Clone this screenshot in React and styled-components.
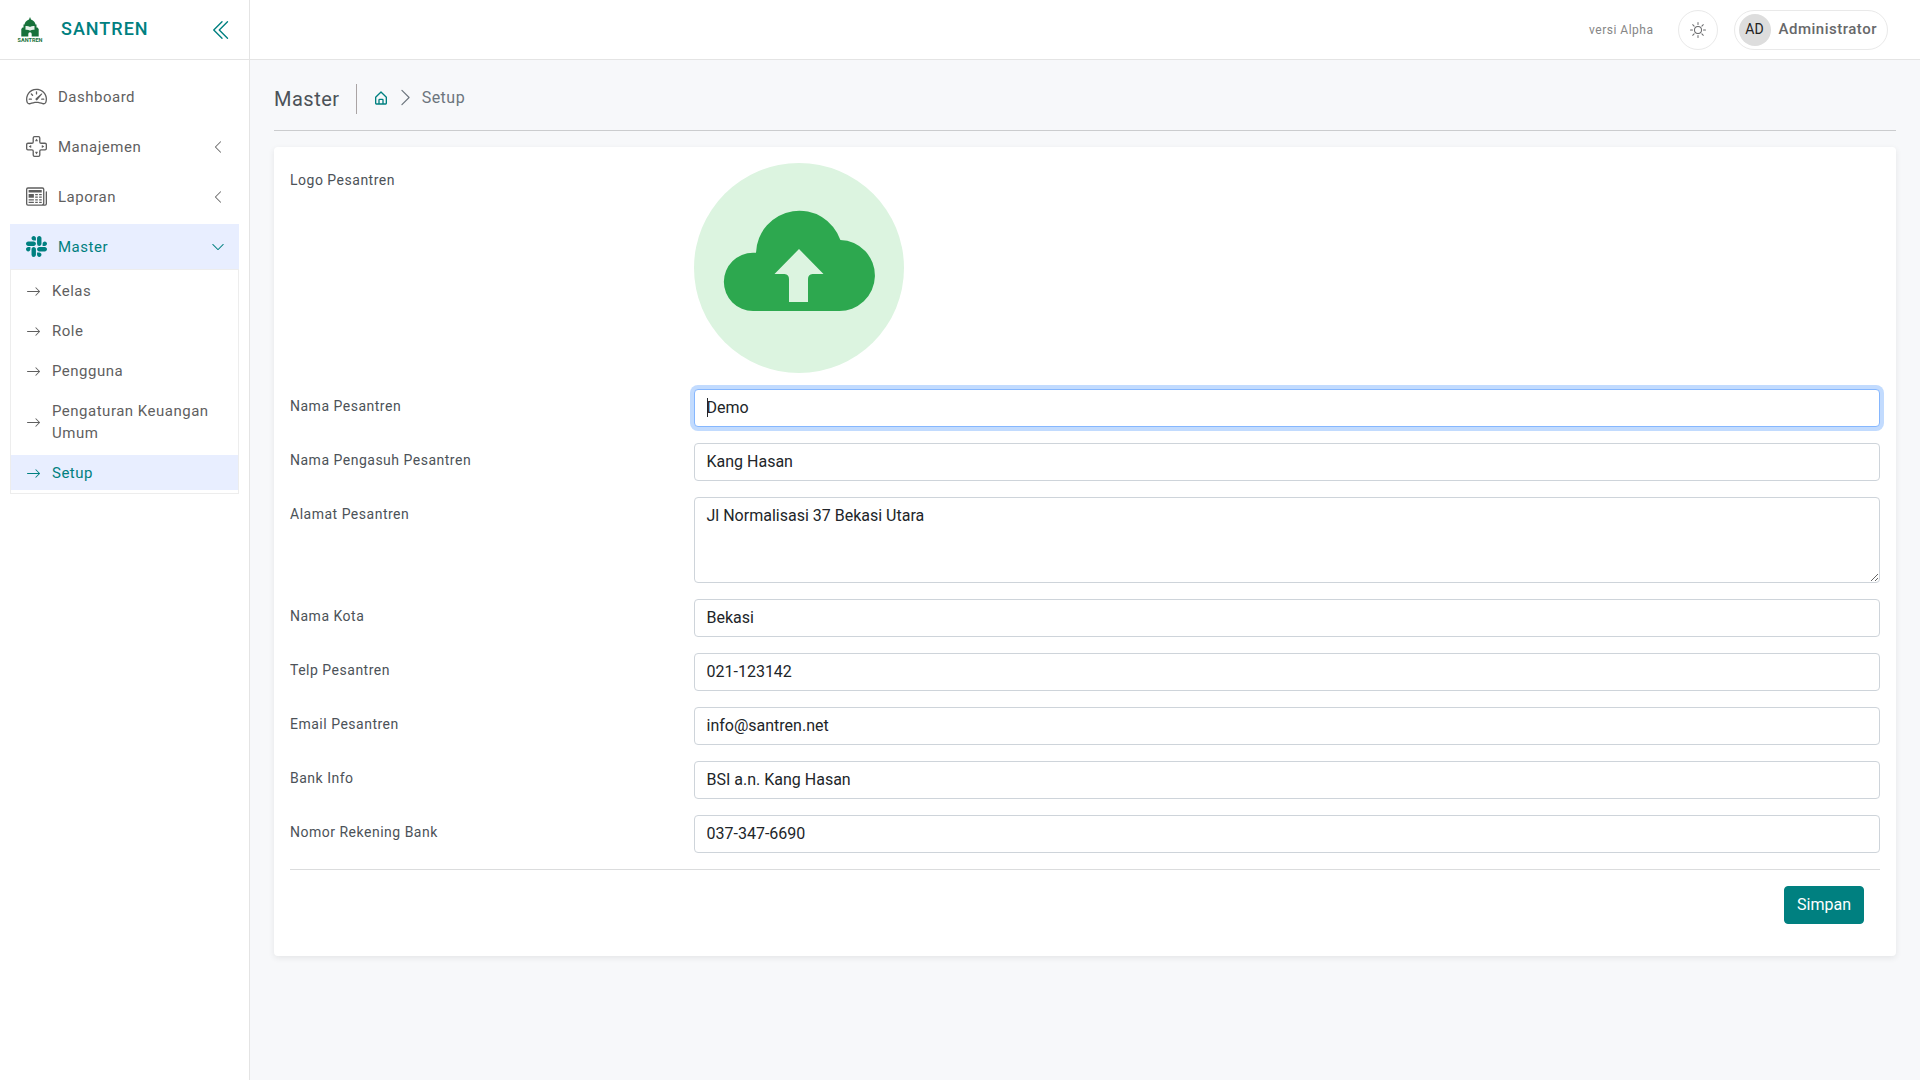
import React, { useState } from 'react';
import styled, { createGlobalStyle, css } from 'styled-components';
import {
	BsArrowRight,
	BsChevronDoubleLeft,
	BsChevronDown,
	BsChevronLeft,
	BsChevronRight,
	BsDpad,
	BsNewspaper,
	BsSlack,
	BsSpeedometer2,
	BsSun,
} from 'react-icons/bs';
import { BiHomeAlt } from 'react-icons/bi';

const GlobalStyle = createGlobalStyle`
*, *::before, *::after {
box-sizing: border-box;
}
body {
margin: 0;
background: #f7f8fa;
color: #4c5258;
font-family: Roboto, 'Liberation Sans', sans-serif;
font-size: 14px;
line-height: 21px;
letter-spacing: 0.036em;
}
a {
color: inherit;
text-decoration: none;
}
`;

const Layout = styled.div`
display: grid;
grid-template-columns: 250px 1fr;
min-height: 100vh;
`;

const Sidebar = styled.aside`
background: #ffffff;
border-right: 1px solid #e4e4e4;
`;

const Brand = styled.div`
display: flex;
align-items: center;
height: 60px;
padding: 0 16px;
border-bottom: 1px solid #e4e4e4;
`;

const BrandName = styled.h4`
flex: 1;
margin: 0 0 0 17px;
padding-bottom: 2px;
color: #008080;
font-size: 18px;
font-weight: 500;
line-height: 24px;
letter-spacing: 1px;
`;

const IconButton = styled.button`
display: flex;
padding: 0;
border: 0;
background: transparent;
color: #008080;
cursor: pointer;
`;

const Menu = styled.ul`
display: flex;
flex-direction: column;
gap: 5px;
margin: 0;
padding: 14px 10px;
list-style: none;
`;

const active = css`
background: #e8eeff;
color: #008080;
`;

const MenuLink = styled.a`
display: flex;
align-items: center;
height: 45px;
padding: 0 14px 0 16px;
color: #5f5f5f;
font-size: 15px;
line-height: 22px;
${props => props.$active && active}
`;

const MenuTitle = styled.span`
flex: 1;
margin-left: 11px;
`;

const SubMenu = styled.ul`
display: flex;
flex-direction: column;
gap: 5px;
margin: 0;
padding: 3px 0;
border: 1px solid #ededed;
list-style: none;
`;

const SubLink = styled.a`
display: flex;
align-items: center;
gap: 11px;
padding: 7px 15px 6px;
color: #5f5f5f;
font-size: 15px;
line-height: 22px;
svg {
flex: none;
}
${props => props.$active && active}
`;

const Topbar = styled.header`
display: flex;
align-items: center;
justify-content: flex-end;
height: 60px;
padding: 0 32px;
background: #ffffff;
border-bottom: 1px solid #e4e4e4;
`;

const Version = styled.span`
margin-right: 24px;
color: #868686;
font-size: 12px;
line-height: 20px;
`;

const ThemeButton = styled(IconButton)`
align-items: center;
justify-content: center;
width: 40px;
height: 40px;
margin-right: 16px;
border: 1px solid #e9e9e9;
border-radius: 50%;
color: #67686a;
`;

const UserButton = styled.button`
display: flex;
align-items: center;
gap: 8px;
height: 40px;
padding: 0 10px 0 4px;
border: 1px solid #e9e9e9;
border-radius: 20px;
background: transparent;
color: #67686a;
font: inherit;
font-size: 15px;
font-weight: 500;
letter-spacing: inherit;
cursor: pointer;
`;

const Avatar = styled.span`
display: flex;
align-items: center;
justify-content: center;
width: 32px;
height: 32px;
border-radius: 50%;
background: #dddddd;
color: #222222;
font-size: 14px;
font-weight: 400;
letter-spacing: normal;
`;

const Content = styled.main`
padding: 24px;
`;

const PageHead = styled.div`
display: flex;
align-items: center;
height: 47px;
margin-bottom: 16px;
padding-bottom: 17px;
border-bottom: 1px solid #cbccce;
`;

const PageTitle = styled.h1`
margin: 0 16px 0 0;
padding-right: 16px;
border-right: 1px solid #aaa4a4;
font-size: 20px;
font-weight: 400;
line-height: 30px;
`;

const Breadcrumb = styled.nav`
display: flex;
align-items: center;
gap: 7px;
padding-bottom: 2px;
color: #6c757d;
font-size: 16px;
line-height: 24px;
a {
display: flex;
color: #008080;
}
`;

const Card = styled.form`
padding: 16px 16px 32px;
border-radius: 4px;
background: #ffffff;
box-shadow: 0 2px 6px rgba(0, 0, 0, 0.08);
`;

const Row = styled.div`
display: flex;
margin: 0 -12px 16px;
`;

const LabelCol = styled.div`
flex: 0 0 25%;
padding: 7px 12px;
`;

const FieldCol = styled.div`
display: flex;
flex: 1;
padding: 0 12px;
`;

const caret = css`
background: linear-gradient(#212529, #212529) 12px 8px / 1px 19px no-repeat #ffffff;
`;

const field = css`
display: block;
width: 100%;
padding: 6px 12px;
border: 1px solid #ced4da;
border-radius: 4px;
background: #ffffff;
color: #212529;
font-family: inherit;
font-size: 16px;
line-height: 24px;
&:focus {
border-color: #86b7fe;
outline: 0;
box-shadow: 0 0 0 4px #c2dbfe;
${props => props.$pristine && caret}
}
`;

const Input = styled.input`
${field}
height: 38px;
padding: 5px 12px 7px;
`;

const TextArea = styled.textarea`
${field}
resize: vertical;
`;

const UploadButton = styled(IconButton)`
border-radius: 50%;
`;

const Footer = styled.div`
display: flex;
justify-content: flex-end;
padding: 16px 16px 0;
border-top: 1px solid #dbdcdd;
`;

const SaveButton = styled.button`
height: 38px;
padding: 6px 12px;
border: 1px solid #008080;
border-radius: 4px;
background: #008080;
color: #ffffff;
font-family: inherit;
font-size: 16px;
line-height: 24px;
cursor: pointer;
`;

const MENU = [
	{ title: 'Dashboard', Icon: BsSpeedometer2 },
	{ title: 'Manajemen', Icon: BsDpad, hasChildren: true },
	{ title: 'Laporan', Icon: BsNewspaper, hasChildren: true },
];

const MASTER = ['Kelas', 'Role', 'Pengguna', 'Pengaturan Keuangan Umum', 'Setup'];

const FIELDS = [
	{ name: 'nama', label: 'Nama Pesantren', value: 'Demo' },
	{ name: 'pengasuh', label: 'Nama Pengasuh Pesantren', value: 'Kang Hasan' },
	{ name: 'alamat', label: 'Alamat Pesantren', value: 'Jl Normalisasi 37 Bekasi Utara', multiline: true },
	{ name: 'kota', label: 'Nama Kota', value: 'Bekasi' },
	{ name: 'telp', label: 'Telp Pesantren', value: '021-123142' },
	{ name: 'email', label: 'Email Pesantren', value: 'info@santren.net' },
	{ name: 'bank', label: 'Bank Info', value: 'BSI a.n. Kang Hasan' },
	{ name: 'rekening', label: 'Nomor Rekening Bank', value: '037-347-6690' },
];

const Logo = () => (
	<svg width="28" height="28" viewBox="0 0 28 28" fill="#17713a">
		<path d="M14 1l1 2.500c2.800 1.200 4.500 2.800 4.500 5.500h-11c0-2.700 1.700-4.300 4.500-5.500z" />
		<path d="M7.500 8.500h13v3h1l1.200 1.500v7.500h-7V18a1.700 1.700 0 0 0-3.400 0v2.500h-7V13l1.200-1.500h1z" />
		<path d="M9.500 10c2 0 3.500.3 4.500 1 1-.7 2.500-1 4.500-1v3.700c-2 0-3.500.3-4.500 1-1-.7-2.500-1-4.500-1z" fill="#e6f2ea" />
		<text x="14" y="26.400" textAnchor="middle" fontSize="5.500" fontWeight="700" letterSpacing="0">SANTREN</text>
	</svg>
);

const CloudUpload = () => (
	<svg width="210" height="210" viewBox="0 0 210 210">
		<circle cx="105" cy="105" r="105" fill="#dcf4e0" />
		<path
			fill="#2da84f"
			d="M59 148a29.150 29.150 0 0 1 0-58.300h3A43.400 43.400 0 0 1 146.400 77A35.500 35.500 0 0 1 144.400 148z"
		/>
		<path
			fill="#dcf4e0"
			d="M105 86l24.500 25h-11a5 5 0 0 0-4.500 5v23H95v-23a5 5 0 0 0-4.500-5h-10z"
		/>
	</svg>
);

const Field = ({ item, onChange, autoFocus }) => {
	const [pristine, setPristine] = useState(autoFocus);
	const Control = item.multiline ? TextArea : Input;

	const handleChange = event => {
		setPristine(false);
		onChange(item.name, event.target.value);
	};

	return (
		<Row>
			<LabelCol><label htmlFor={item.name}>{item.label}</label></LabelCol>
			<FieldCol>
				<Control
					id={item.name}
					rows={item.multiline ? 3 : undefined}
					value={item.value}
					autoFocus={autoFocus}
					$pristine={pristine}
					onChange={handleChange}
				/>
			</FieldCol>
		</Row>
	);
}

const App = () => {
	const [fields, setFields] = useState(FIELDS);

	const handleChange = (name, value) => {
		setFields(fields.map(item => (item.name === name ? { ...item, value } : item)));
	};

	return (
		<Layout>
			<GlobalStyle />
			<Sidebar>
				<Brand>
					<Logo />
					<BrandName>SANTREN</BrandName>
					<IconButton type="button" aria-label="Toggle menu"><BsChevronDoubleLeft size={22} /></IconButton>
				</Brand>
				<Menu>
					{MENU.map(({ title, Icon, hasChildren }) => (
						<li key={title}>
							<MenuLink href="#">
								<Icon size={21} />
								<MenuTitle>{title}</MenuTitle>
								{hasChildren && <BsChevronLeft size={14} />}
							</MenuLink>
						</li>
					))}
					<li>
						<MenuLink href="#" $active>
							<BsSlack size={21} />
							<MenuTitle>Master</MenuTitle>
							<BsChevronDown size={14} />
						</MenuLink>
						<SubMenu>
							{MASTER.map(title => (
								<li key={title}>
									<SubLink href="#" $active={title === 'Setup'}>
										<BsArrowRight size={15} />
										{title}
									</SubLink>
								</li>
							))}
						</SubMenu>
					</li>
				</Menu>
			</Sidebar>
			<div>
				<Topbar>
					<Version>versi Alpha</Version>
					<ThemeButton type="button" aria-label="Theme"><BsSun size={16} /></ThemeButton>
					<UserButton type="button">
						<Avatar>AD</Avatar>
						Administrator
					</UserButton>
				</Topbar>
				<Content>
					<PageHead>
						<PageTitle>Master</PageTitle>
						<Breadcrumb>
							<a href="#" aria-label="Home"><BiHomeAlt size={16} /></a>
							<BsChevronRight size={19} />
							<span>Setup</span>
						</Breadcrumb>
					</PageHead>
					<Card onSubmit={event => event.preventDefault()}>
						<Row>
							<LabelCol>Logo Pesantren</LabelCol>
							<FieldCol>
								<UploadButton type="button" aria-label="Logo Pesantren"><CloudUpload /></UploadButton>
							</FieldCol>
						</Row>
						{fields.map((item, index) => (
							<Field key={item.name} item={item} autoFocus={index === 0} onChange={handleChange} />
						))}
						<Footer>
							<SaveButton type="submit">Simpan</SaveButton>
						</Footer>
					</Card>
				</Content>
			</div>
		</Layout>
	);
}

export default App;
